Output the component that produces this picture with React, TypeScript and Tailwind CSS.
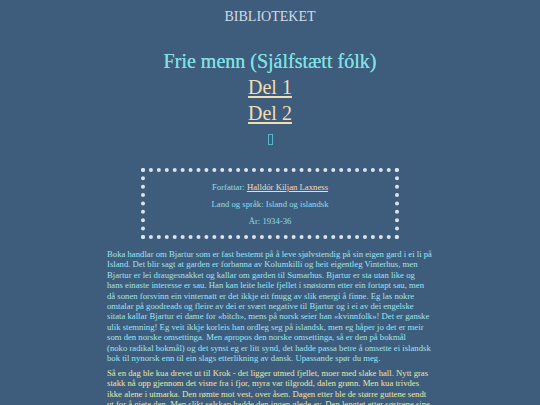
import React from "react";

const para1 = [
  "Boka handlar om Bjartur som er fast bestemt på å leve sjølvstendig på sin eigen gard i ei li på",
  "Island. Det blir sagt at garden er forbanna av Kolumkilli og heit eigentleg Vinterhus, men",
  "Bjartur er lei draugesnakket og kallar om garden til Sumarhus. Bjartur er sta utan like og",
  "hans einaste interesse er sau. Han kan leite heile fjellet i snøstorm etter ein fortapt sau, men",
  "då sonen forsvinn ein vinternatt er det ikkje eit fnugg av slik energi å finne. Eg las nokre",
  "omtalar på goodreads og fleire av dei er svært negative til Bjartur og i ei av dei engelske",
  "sitata kallar Bjartur ei dame for «bitch», mens på norsk seier han «kvinnfolk»! Det er ganske",
  "ulik stemning! Eg veit ikkje korleis han ordleg seg på islandsk, men eg håper jo det er meir",
  "som den norske omsettinga. Men apropos den norske omsettinga, så er den på bokmål",
  "(noko radikal bokmål) og det synst eg er litt synd, det hadde passa betre å omsette ei islandsk",
  "bok til nynorsk enn til ein slags etterlikning av dansk. Upassande spør du meg.",
];

const para2 = [
  "Så en dag ble kua drevet ut til Krok - det ligger utmed fjellet, moer med slake hall. Nytt gras",
  "stakk nå opp gjennom det visne fra i fjor, myra var tilgrodd, dalen grønn. Men kua trivdes",
  "ikke alene i utmarka. Den rømte mot vest, over åsen. Dagen etter ble de større guttene sendt",
  "ut for å gjete den. Men slikt selskap hadde den ingen glede av. Den lengtet etter søstrene sine",
  "i dalen, og den rautet og rautet utover heia.",
];

function Lines({ lines }: { lines: string[] }) {
  return (
    <>
      {lines.map((l, i) => (
        <span key={i} className="block whitespace-nowrap">
          {l}
        </span>
      ))}
    </>
  );
}

export default function App() {
  return (
    <div className="min-h-screen bg-[#3e5d7d] font-['Liberation_Serif',serif]">
      <header className="pt-[8px] text-center text-[14px] leading-[18px] text-[#d3dae3]">
        BIBLIOTEKET
      </header>

      <main className="mx-auto w-[326px] text-center">
        <h1 className="mt-[22px] text-[20px] leading-[26px] text-[#7fe0e4] [text-shadow:0_0_0.4px_#7fe0e4]">
          Frie menn (Sjálfstætt fólk)
        </h1>
        <div className="text-[20px] leading-[26px]">
          <a href="#" className="block text-[#f3deb4] underline underline-offset-2">
            Del 1
          </a>
          <a href="#" className="block text-[#f3deb4] underline underline-offset-2">
            Del 2
          </a>
        </div>
        <div className="flex h-[26px] items-center justify-center">
          <span className="inline-block h-[11px] w-[5px] border border-[#5db3cc]"></span>
        </div>

        <div className="mx-auto mt-[16px] flex h-[71px] w-[258px] flex-col gap-[5px] border-4 border-dotted border-[#dde3ea] pt-[9px] text-[8.7px] leading-[12px] text-[#8fdde8]">
          <p>
            Forfattar:{" "}
            <a href="#" className="text-[#ecdcc4] underline">
              Halldór Kiljan Laxness
            </a>
          </p>
          <p>Land og språk: Island og islandsk</p>
          <p>År: 1934-36</p>
        </div>

        <div className="mt-[10px] text-left text-[8.7px] leading-[10.4px]">
          <p className="text-[#9fe3ee]">
            <Lines lines={para1} />
          </p>
          <p className="mt-[4.5px] text-[#ebe7a2]">
            <Lines lines={para2} />
          </p>
        </div>
      </main>
    </div>
  );
}
